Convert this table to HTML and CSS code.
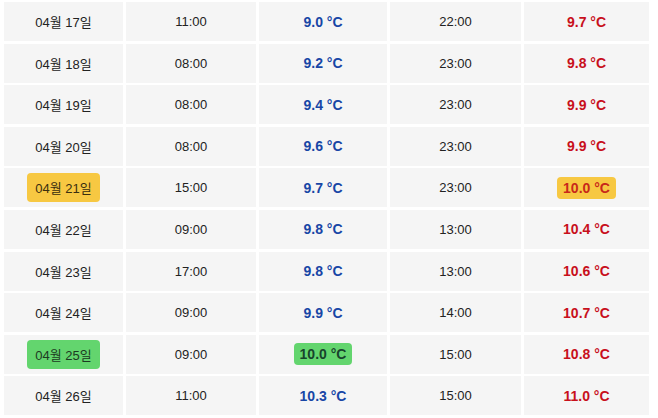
FILE: index.html
```html
<!DOCTYPE html>
<html lang="ko">
<head>
<meta charset="utf-8">
<link rel="stylesheet" href="styles.css">
</head>
<body>
<div class="table">
  <div class="row"><div class="cell">04월 17일</div><div class="cell">11:00</div><div class="cell low">9.0 °C</div><div class="cell">22:00</div><div class="cell high">9.7 °C</div></div>
  <div class="row"><div class="cell">04월 18일</div><div class="cell">08:00</div><div class="cell low">9.2 °C</div><div class="cell">23:00</div><div class="cell high">9.8 °C</div></div>
  <div class="row"><div class="cell">04월 19일</div><div class="cell">08:00</div><div class="cell low">9.4 °C</div><div class="cell">23:00</div><div class="cell high">9.9 °C</div></div>
  <div class="row"><div class="cell">04월 20일</div><div class="cell">08:00</div><div class="cell low">9.6 °C</div><div class="cell">23:00</div><div class="cell high">9.9 °C</div></div>
  <div class="row"><div class="cell"><span class="mark yellow date">04월 21일</span></div><div class="cell">15:00</div><div class="cell low">9.7 °C</div><div class="cell">23:00</div><div class="cell high"><span class="mark yellow temp">10.0 °C</span></div></div>
  <div class="row"><div class="cell">04월 22일</div><div class="cell">09:00</div><div class="cell low">9.8 °C</div><div class="cell">13:00</div><div class="cell high">10.4 °C</div></div>
  <div class="row"><div class="cell">04월 23일</div><div class="cell">17:00</div><div class="cell low">9.8 °C</div><div class="cell">13:00</div><div class="cell high">10.6 °C</div></div>
  <div class="row"><div class="cell">04월 24일</div><div class="cell">09:00</div><div class="cell low">9.9 °C</div><div class="cell">14:00</div><div class="cell high">10.7 °C</div></div>
  <div class="row"><div class="cell"><span class="mark green date">04월 25일</span></div><div class="cell">09:00</div><div class="cell low"><span class="mark green temp">10.0 °C</span></div><div class="cell">15:00</div><div class="cell high">10.8 °C</div></div>
  <div class="row"><div class="cell">04월 26일</div><div class="cell">11:00</div><div class="cell low">10.3 °C</div><div class="cell">15:00</div><div class="cell high">11.0 °C</div></div>
</div>
</body>
</html>
```
FILE: styles.css
```css
html, body {
  margin: 0;
  padding: 0;
  background: #ffffff;
}
body {
  font-family: "Liberation Sans", "Noto Sans CJK KR", Arial, sans-serif;
  font-size: 13px;
  color: #222222;
}
.table {
  display: grid;
  grid-template-rows: repeat(10, 39px);
  row-gap: 2.6px;
  padding: 2px 4px 0 4px;
  width: 650px;
}
.row {
  display: grid;
  grid-template-columns: 119px 130px 128px 131px 125px;
  column-gap: 3px;
}
.cell {
  background: #f5f5f5;
  display: flex;
  align-items: center;
  justify-content: center;
}
.low {
  color: #1846a6;
  font-weight: bold;
  font-size: 14px;
}
.high {
  color: #c8101c;
  font-weight: bold;
  font-size: 14px;
}
.mark {
  border-radius: 4px;
}
.mark.date {
  padding: 5px 8px;
}
.mark.temp {
  padding: 3px 6px;
}
.yellow {
  background: #f7c842;
}
.green {
  background: #63d56e;
}
.date.yellow {
  color: #3a2f10;
}
.temp.yellow {
  color: #c8281a;
}
.date.green {
  color: #1d3a22;
}
.temp.green {
  color: #17432c;
}
```
